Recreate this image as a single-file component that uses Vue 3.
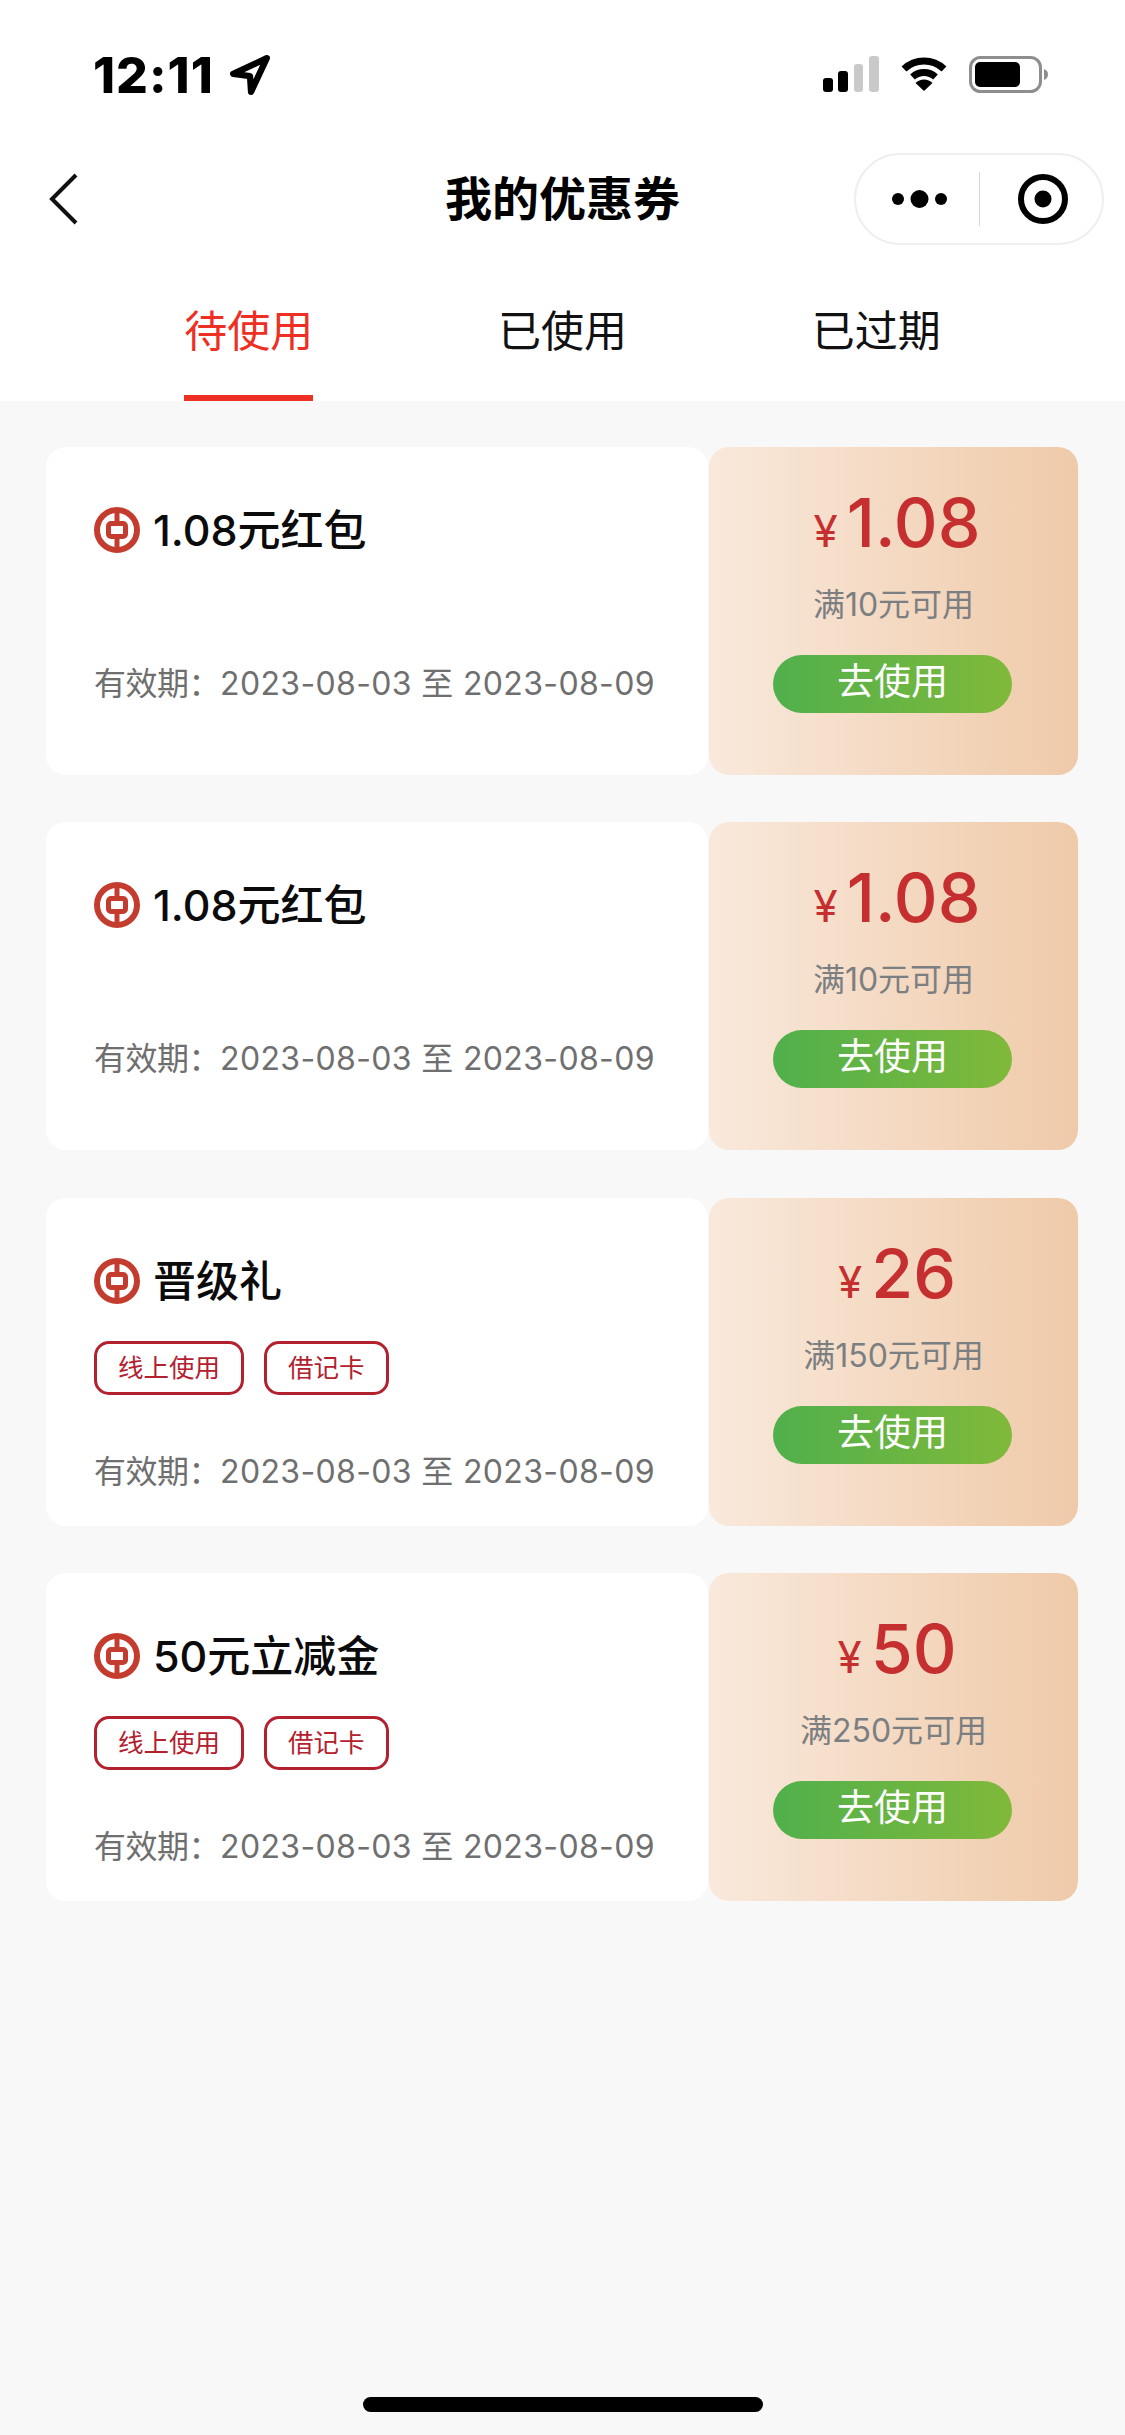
<script setup>
const tabs = ['待使用', '已使用', '已过期']
const coupons = [
  { title: '1.08元红包', amount: '1.08', rule: '满10元可用', tags: [] },
  { title: '1.08元红包', amount: '1.08', rule: '满10元可用', tags: [] },
  { title: '晋级礼', amount: '26', rule: '满150元可用', tags: ['线上使用', '借记卡'] },
  { title: '50元立减金', amount: '50', rule: '满250元可用', tags: ['线上使用', '借记卡'] },
]
</script>

<template>
  <div class="page">
    <header class="top">
      <div class="status">
        <div class="time-wrap">
          <span class="time">12:11</span>
          <svg class="loc" width="42" height="42" viewBox="0 0 40 40">
            <path d="M36 4 L4 19 L20 21 L21 36 Z" fill="none" stroke="#000" stroke-width="6" stroke-linejoin="round" />
          </svg>
        </div>
        <div class="sys">
          <svg width="56" height="36" viewBox="0 0 56 36">
            <rect x="0" y="22" width="10" height="14" rx="3" fill="#000" />
            <rect x="15" y="15" width="10" height="21" rx="3" fill="#000" />
            <rect x="31" y="8" width="9" height="28" rx="3" fill="#c9c9c9" />
            <rect x="46" y="0" width="10" height="36" rx="3" fill="#c9c9c9" />
          </svg>
          <svg class="wifi" width="48" height="36" viewBox="0 0 48 36">
            <path d="M4 13 A29 29 0 0 1 44 13" fill="none" stroke="#000" stroke-width="7" />
            <path d="M12.500 21 A17 17 0 0 1 35.500 21" fill="none" stroke="#000" stroke-width="7" />
            <path d="M15.500 27 A12 12 0 0 1 32.500 27 L24 35 Z" fill="#000" />
          </svg>
          <svg class="batt" width="80" height="37" viewBox="0 0 80 37">
            <rect x="1.500" y="1.500" width="70" height="34" rx="10" fill="none" stroke="#8e8e8e" stroke-width="3" />
            <rect x="6" y="6" width="45" height="25" rx="5" fill="#000" />
            <path d="M75 13 C78 14 79 16 79 18.500 C79 21 78 23 75 24 Z" fill="#8e8e8e" />
          </svg>
        </div>
      </div>
      <nav class="nav">
        <svg class="back" width="30" height="52" viewBox="0 0 30 52">
          <path d="M28 2 L4 26 L28 50" fill="none" stroke="#111" stroke-width="4" />
        </svg>
        <h1 class="title">我的优惠券</h1>
        <div class="capsule">
          <svg class="more" width="56" height="18" viewBox="0 0 56 18">
            <circle cx="6" cy="9" r="6" fill="#000" />
            <circle cx="27.500" cy="9" r="9" fill="#000" />
            <circle cx="49" cy="9" r="6" fill="#000" />
          </svg>
          <i class="divider"></i>
          <svg class="target" width="50" height="50" viewBox="0 0 50 50">
            <circle cx="25" cy="25" r="22" fill="none" stroke="#000" stroke-width="6" />
            <circle cx="25" cy="25" r="8.500" fill="#000" />
          </svg>
        </div>
      </nav>
      <div class="tabs">
        <div v-for="(t, i) in tabs" :key="t" class="tab" :class="{ on: i === 0 }">
          <span class="tab-label">{{ t }}</span>
        </div>
      </div>
    </header>

    <main class="list">
      <article v-for="(c, i) in coupons" :key="i" class="coupon">
        <div class="info">
          <div class="head">
            <svg class="logo" width="46" height="46" viewBox="0 0 46 46">
              <circle cx="23" cy="23" r="20" fill="none" stroke="#c43c2e" stroke-width="6" />
              <rect x="14.500" y="16.500" width="17" height="13" rx="2.500" fill="none" stroke="#c43c2e" stroke-width="5" />
              <path d="M23 3 V16 M23 30 V43" stroke="#c43c2e" stroke-width="5" />
            </svg>
            <span class="name">{{ c.title }}</span>
          </div>
          <div class="tags">
            <span v-for="t in c.tags" :key="t" class="tag">{{ t }}</span>
          </div>
          <p class="date"><span class="date-label">有效期：</span>2023-08-03 至 2023-08-09</p>
        </div>
        <div class="side">
          <div class="price">
            <span class="yen">¥</span><span class="amount">{{ c.amount }}</span>
          </div>
          <div class="rule">{{ c.rule }}</div>
          <div class="btn">去使用</div>
        </div>
      </article>
    </main>

    <div class="home"></div>
  </div>
</template>

<style>
html, body { margin: 0; background: #f8f8f8; }
</style>

<style scoped>
.page {
  position: relative;
  width: 1125px;
  height: 2435px;
  background: #f8f8f8;
  overflow: hidden;
  font-family: Inter, "Noto Sans CJK SC", sans-serif;
}
.top { background: #fff; height: 401px; display: flex; flex-direction: column; }
.status {
  height: 153px;
  padding: 55px 76px 0 93px;
  box-sizing: border-box;
  display: flex;
  justify-content: space-between;
  align-items: flex-start;
}
.time-wrap { display: flex; align-items: center; gap: 15px; height: 40px; }
.time { font-size: 50px; font-weight: 800; letter-spacing: 1px; line-height: 40px; color: #000; }
.sys { display: flex; gap: 21px; align-items: flex-start; padding-top: 1px; }
.nav {
  height: 92px;
  display: flex;
  align-items: center;
  position: relative;
  padding: 0 21px 0 48px;
}
.back { flex: none; }
.title {
  position: absolute;
  left: 0;
  right: 0;
  margin: 0;
  text-align: center;
  font-size: 47px;
  line-height: 92px;
  font-weight: 700;
  color: #000;
}
.capsule {
  margin-left: auto;
  width: 250px;
  height: 92px;
  box-sizing: border-box;
  border: 2px solid #efefef;
  border-radius: 46px;
  display: flex;
  align-items: center;
  position: relative;
  background: #fff;
}
.more { margin-left: 36px; }
.divider { width: 1px; height: 54px; background: #d8d8d8; margin-left: 31px; }
.target { margin-left: 38px; }
.tabs { display: flex; padding: 0 92px; margin-top: 0; flex: 1; }
.tab { flex: 1; display: flex; justify-content: center; }
.tab-label {
  font-size: 43px;
  line-height: 60px;
  padding-top: 56px;
  color: #111;
  height: 100px;
  width: 129px;
  text-align: center;
}
.tab.on .tab-label { color: #ee3024; border-bottom: 6px solid #ee3024; height: 94px; }

.list { padding: 46px 47px 0 46px; display: flex; flex-direction: column; gap: 47.300px; }
.coupon { display: flex; height: 328px; }
.info {
  width: 662px;
  background: #fff;
  border-radius: 20px;
  box-sizing: border-box;
  padding: 60px 48px 0;
  display: flex;
  flex-direction: column;
}
.head { display: flex; align-items: center; gap: 13px; height: 46px; }
.logo { flex: none; }
.name { font-size: 43px; font-weight: 500; line-height: 46px; color: #0b0b0b; }
.tags { display: flex; gap: 20px; margin-top: 37px; min-height: 17px; }
.tag {
  border: 3px solid #b3202e;
  border-radius: 15px;
  box-sizing: border-box;
  height: 54px;
  padding: 0 21px;
  font-size: 25.500px;
  line-height: 47px;
  color: #b3202e;
}
.date {
  margin: 55px 0 0;
  font-size: 32px;
  letter-spacing: 0.350px;
  line-height: 44px;
  color: #6f6f6f;
  white-space: nowrap;
}
.date-label { letter-spacing: -0.500px; }
.side {
  margin-left: 1px;
  width: 369px;
  border-radius: 20px;
  background: linear-gradient(90deg, #f9e9dc, #efcaa9);
  display: flex;
  flex-direction: column;
  align-items: center;
}
.price { display: flex; align-items: baseline; justify-content: center; height: 76px; margin-top: 37px; padding-left: 7px; color: #c62f2f; }
.yen { font-size: 44px; margin-right: 9px; }
.amount { font-size: 68px; line-height: 76px; font-weight: 500; }
.rule { font-size: 32px; line-height: 44px; margin-top: 23px; color: #7c7f82; }
.btn {
  margin-top: 28px;
  margin-right: 2px;
  width: 239px;
  height: 58px;
  border-radius: 29px;
  background: linear-gradient(90deg, #50b04c, #80b93a);
  color: #fff;
  font-size: 37px;
  line-height: 54px;
  text-align: center;
}
.home {
  position: absolute;
  left: 363px;
  top: 2397px;
  width: 400px;
  height: 15px;
  border-radius: 8px;
  background: #000;
}
</style>
